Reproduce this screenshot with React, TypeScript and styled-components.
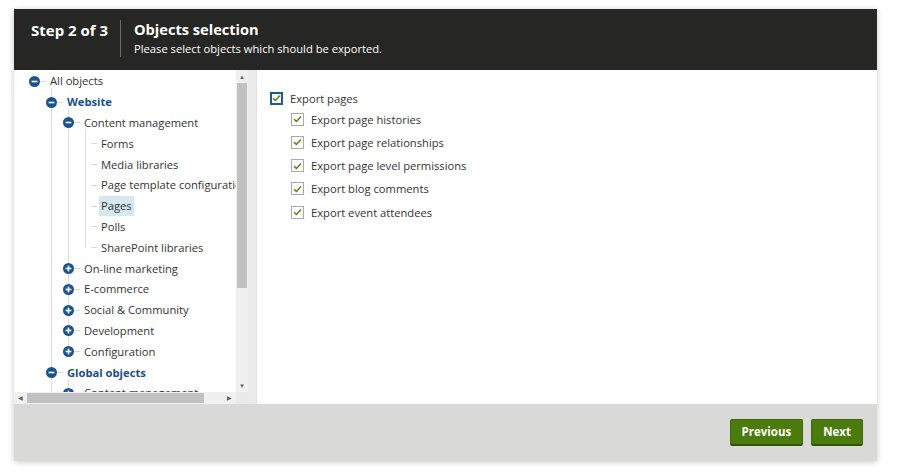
import * as React from 'react';
import styled, { createGlobalStyle } from 'styled-components';

const GlobalStyle = createGlobalStyle`
    html, body {
        margin: 0;
        padding: 0;
        background: #ffffff;
        font-family: "Open Sans", "Noto Sans", sans-serif;
    }
`;

interface TreeItem {
    label: string;
    bold?: boolean;
    open?: boolean;
    selected?: boolean;
    children?: TreeItem[];
}

const tree: TreeItem = {
    label: 'All objects',
    open: true,
    children: [
        {
            label: 'Website',
            bold: true,
            open: true,
            children: [
                {
                    label: 'Content management',
                    open: true,
                    children: [
                        { label: 'Forms' },
                        { label: 'Media libraries' },
                        { label: 'Page template configurations' },
                        { label: 'Pages', selected: true },
                        { label: 'Polls' },
                        { label: 'SharePoint libraries' },
                    ],
                },
                { label: 'On-line marketing', open: false, children: [] },
                { label: 'E-commerce', open: false, children: [] },
                { label: 'Social & Community', open: false, children: [] },
                { label: 'Development', open: false, children: [] },
                { label: 'Configuration', open: false, children: [] },
            ],
        },
        {
            label: 'Global objects',
            bold: true,
            open: true,
            children: [{ label: 'Content management', open: false, children: [] }],
        },
    ],
};

const exportOptions = [
    'Export page histories',
    'Export page relationships',
    'Export page level permissions',
    'Export blog comments',
    'Export event attendees',
];

const ToggleIcon = ({ open }: { open: boolean }) => (
    <svg width="11" height="11" viewBox="0 0 11 11">
        <circle cx="5.5" cy="5.5" r="5.5" fill="#1b5391" />
        <rect x="2.6" y="4.7" width="5.8" height="1.6" fill="#fff" />
        {!open && <rect x="4.7" y="2.6" width="1.6" height="5.8" fill="#fff" />}
    </svg>
);

const Check = () => (
    <svg width="9" height="8" viewBox="0 0 9 8">
        <path d="M1 4.2 L3.4 6.4 L8 1.4" fill="none" stroke="#4f8a10" strokeWidth="1.5" />
    </svg>
);

const TreeNode = ({ item, depth }: { item: TreeItem; depth: number }) => {
    const hasToggle = item.children !== undefined;
    return (
        <div>
            <Row depth={depth}>
                <IconCell>{hasToggle && <ToggleIcon open={!!item.open} />}</IconCell>
                <Dash />
                <Label bold={item.bold} selected={item.selected}>{item.label}</Label>
            </Row>
            {item.open && item.children && item.children.length > 0 && (
                <Group depth={depth + 1}>
                    {item.children.map((c, i) => (
                        <TreeNode key={i} item={c} depth={depth + 1} />
                    ))}
                </Group>
            )}
        </div>
    );
};

export default function App() {
    return (
        <Page>
            <GlobalStyle />
            <Dialog>
                <Header>
                    <Step>Step 2 of 3</Step>
                    <Divider />
                    <TitleBlock>
                        <Title>Objects selection</Title>
                        <Subtitle>Please select objects which should be exported.</Subtitle>
                    </TitleBlock>
                </Header>
                <Body>
                    <TreePane>
                        <TreeArea>
                            <TreeScroll>
                                <TreeNode item={tree} depth={0} />
                            </TreeScroll>
                            <VScroll>
                                <Arrow>▲</Arrow>
                                <VTrack><VThumb /></VTrack>
                                <Arrow>▼</Arrow>
                            </VScroll>
                        </TreeArea>
                        <HScrollRow>
                            <HScroll>
                                <HArrow>◀</HArrow>
                                <HTrack><HThumb /></HTrack>
                                <HArrow>▶</HArrow>
                            </HScroll>
                            <Corner />
                        </HScrollRow>
                    </TreePane>
                    <Splitter />
                    <Content>
                        <CheckRow>
                            <Box primary><Check /></Box>
                            <CheckLabel>Export pages</CheckLabel>
                        </CheckRow>
                        <SubList>
                            {exportOptions.map((o) => (
                                <CheckRow key={o}>
                                    <Box><Check /></Box>
                                    <CheckLabel>{o}</CheckLabel>
                                </CheckRow>
                            ))}
                        </SubList>
                    </Content>
                </Body>
                <Footer>
                    <Button>Previous</Button>
                    <Button>Next</Button>
                </Footer>
            </Dialog>
        </Page>
    );
}

const Page = styled.div`
    width: 900px;
    height: 474px;
    padding: 9px 0 0 14px;
    box-sizing: border-box;
`;

const Dialog = styled.div`
    width: 863px;
    height: 452px;
    display: flex;
    flex-direction: column;
    background: #fff;
    box-shadow: 0 1px 6px rgba(0, 0, 0, 0.22);
`;

const Header = styled.div`
    height: 61px;
    flex: none;
    background: #262624;
    color: #fff;
    display: flex;
    align-items: flex-start;
    padding: 10px 0 0 17px;
    box-sizing: border-box;
`;

const Step = styled.div`
    font-size: 15px;
    font-weight: 700;
    line-height: 20px;
    padding-top: 1px;
    width: 89px;
`;

const Divider = styled.div`
    width: 1px;
    height: 37px;
    margin-top: 1px;
    background: #6a6a6a;
`;

const TitleBlock = styled.div`
    padding-left: 13px;
    display: flex;
    flex-direction: column;
`;

const Title = styled.div`
    font-size: 14.6px;
    font-weight: 700;
    line-height: 20px;
`;

const Subtitle = styled.div`
    font-size: 11.2px;
    line-height: 18px;
    margin-top: 1px;
`;

const Body = styled.div`
    flex: 1;
    display: flex;
    min-height: 0;
`;

const TreePane = styled.div`
    width: 234px;
    display: flex;
    flex-direction: column;
`;

const TreeArea = styled.div`
    flex: 1;
    display: flex;
    min-height: 0;
`;

const TreeScroll = styled.div`
    width: 222px;
    overflow: hidden;
    padding-top: 1px;
`;

const Row = styled.div<{ depth: number }>`
    height: 20.8px;
    display: flex;
    align-items: center;
    padding-left: ${(p) => 15 + p.depth * 17}px;
    white-space: nowrap;
`;

const IconCell = styled.span`
    position: relative;
    z-index: 1;
    width: 11px;
    height: 11px;
    flex: none;
    display: flex;
`;

const Dash = styled.span`
    width: 6px;
    height: 1px;
    background: #d8d8d8;
    flex: none;
    margin-right: 4px;
`;

const Label = styled.span<{ bold?: boolean; selected?: boolean }>`
    font-size: 11.2px;
    line-height: 20px;
    color: ${(p) => (p.bold ? '#1b4f86' : '#333')};
    font-weight: ${(p) => (p.bold ? 700 : 400)};
    background: ${(p) => (p.selected ? '#d5e7ef' : 'transparent')};
    padding: 0 2px;
    margin-left: -2px;
`;

const Group = styled.div<{ depth: number }>`
    position: relative;
    &::before {
        content: '';
        position: absolute;
        left: ${(p) => 20 + p.depth * 17}px;
        top: -4px;
        bottom: 10px;
        border-left: 1px solid #dcdcdc;
    }
`;

const VScroll = styled.div`
    width: 12px;
    background: #f0f0f0;
    display: flex;
    flex-direction: column;
`;

const Arrow = styled.div`
    height: 13px;
    font-size: 6px;
    color: #606060;
    display: flex;
    align-items: center;
    justify-content: center;
`;

const VTrack = styled.div`
    flex: 1;
    padding: 0 1px;
`;

const VThumb = styled.div`
    height: 205px;
    background: #c1c1c1;
`;

const HScrollRow = styled.div`
    height: 12px;
    flex: none;
    display: flex;
`;

const HScroll = styled.div`
    width: 222px;
    background: #f0f0f0;
    display: flex;
`;

const HArrow = styled.div`
    width: 13px;
    font-size: 6px;
    color: #606060;
    display: flex;
    align-items: center;
    justify-content: center;
`;

const HTrack = styled.div`
    flex: 1;
    padding: 1px 0;
`;

const HThumb = styled.div`
    width: 177px;
    height: 100%;
    background: #c1c1c1;
`;

const Corner = styled.div`
    width: 12px;
    background: #e9e9e9;
`;

const Splitter = styled.div`
    width: 8px;
    background: #ebebeb;
    border-right: 1px solid #e0e0e0;
`;

const Content = styled.div`
    flex: 1;
    padding: 18px 0 0 13px;
`;

const SubList = styled.div`
    padding-left: 21px;
    padding-top: 1px;
    display: flex;
    flex-direction: column;
    gap: 3.3px;
`;

const CheckRow = styled.div`
    display: flex;
    align-items: center;
    height: 20px;
`;

const Box = styled.span<{ primary?: boolean }>`
    width: 13px;
    height: 13px;
    box-sizing: border-box;
    border: ${(p) => (p.primary ? '2px solid #1c5a96' : '1px solid #a9a9a9')};
    background: #fff;
    display: flex;
    align-items: center;
    justify-content: center;
    margin-right: 7px;
`;

const CheckLabel = styled.span`
    font-size: 11.2px;
    color: #333;
`;

const Footer = styled.div`
    height: 57px;
    flex: none;
    background: #d9dad8;
    display: flex;
    justify-content: flex-end;
    align-items: center;
    gap: 8px;
    padding: 0 14px 1px 0;
    box-sizing: border-box;
`;

const Button = styled.button`
    height: 27px;
    padding: 0 11px;
    background: #4a7b0c;
    color: #fff;
    font-family: "Open Sans", "Noto Sans", sans-serif;
    font-weight: 700;
    font-size: 11.5px;
    border: 1px solid #3d6a08;
    border-bottom: 2px solid #2f5505;
    border-radius: 2px;
`;
